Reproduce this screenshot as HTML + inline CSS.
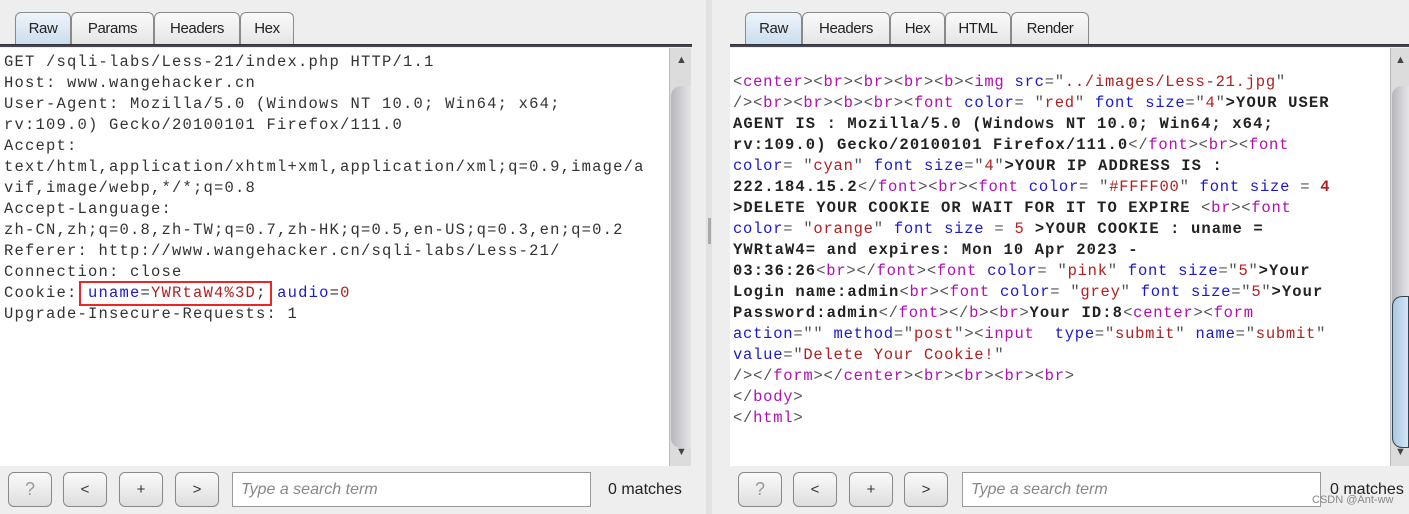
<!DOCTYPE html>
<html><head><meta charset="utf-8"><style>
*{margin:0;padding:0;box-sizing:border-box}
body{width:1409px;height:514px;background:#eeeeee;position:relative;overflow:hidden;font-family:"Liberation Sans",sans-serif}
.abs{position:absolute}
.tab{position:absolute;top:12px;height:34px;border:1px solid #8a8a8a;border-bottom:none;border-radius:6px 6px 0 0;background:linear-gradient(#fafafa,#e4e4e4);font-size:15px;color:#222;text-align:center;line-height:32px;letter-spacing:-0.4px}
.tab.on{background:linear-gradient(#eef4fa,#c9dcee)}
.bar{position:absolute;top:44px;height:3px;background:#445;border-top:1px solid #333}
.ed{position:absolute;background:#fff}
.ln{position:absolute;white-space:pre;font-family:"Liberation Mono",monospace;font-size:15.5px;line-height:21px;color:#333}
.L .ln{letter-spacing:1.2px;left:4px}
.R .ln{letter-spacing:1.1px;left:733px;font-weight:bold;color:#222}
.R .ln span{letter-spacing:0.75px}
.t{color:#b010b0;font-weight:normal}
.p{color:#555;font-weight:normal}
.a{color:#1a1acc;font-weight:normal}
.v{color:#b02020;font-weight:normal}
.sb{position:absolute;width:22px;background:#dcdcdc;border-left:1px solid #bbb}
.thumb{position:absolute;left:1px;right:0;border-radius:10px 0 0 10px;background:linear-gradient(90deg,#b5b5ba,#d4d4d8 60%,#e4e4e6)}
.btn{position:absolute;top:472px;width:44px;height:35px;border:1px solid #888;border-radius:6px;background:linear-gradient(#fafafa,#dedede);text-align:center;line-height:33px;font-size:15px;color:#333}
.inp{position:absolute;top:472px;height:35px;background:#fff;border:1px solid #999;font-style:italic;color:#888;font-size:16px;line-height:33px;padding-left:8px}
.m{position:absolute;top:481px;font-size:16px;color:#222}
</style></head><body>
<div class="tab on" style="left:15px;width:56px">Raw</div>
<div class="tab" style="left:71px;width:83px">Params</div>
<div class="tab" style="left:154px;width:86px">Headers</div>
<div class="tab" style="left:240px;width:54px">Hex</div>
<div class="bar" style="left:0;width:692px"></div>
<div class="ed" style="left:0;top:48px;width:669px;height:418px"></div>
<div class="sb" style="left:669px;top:48px;height:418px"><div class="abs" style="top:6px;left:6px;font-size:11px;color:#444">▲</div><div class="thumb" style="top:38px;height:362px"></div><div class="abs" style="top:398px;left:6px;font-size:11px;color:#444">▼</div></div>
<div class="L">
<div class="ln" style="top:52px">GET /sqli-labs/Less-21/index.php HTTP/1.1</div>
<div class="ln" style="top:73px">Host: www.wangehacker.cn</div>
<div class="ln" style="top:94px">User-Agent: Mozilla/5.0 (Windows NT 10.0; Win64; x64;</div>
<div class="ln" style="top:115px">rv:109.0) Gecko/20100101 Firefox/111.0</div>
<div class="ln" style="top:136px">Accept:</div>
<div class="ln" style="top:157px">text/html,application/xhtml+xml,application/xml;q=0.9,image/a</div>
<div class="ln" style="top:178px">vif,image/webp,*/*;q=0.8</div>
<div class="ln" style="top:199px">Accept-Language:</div>
<div class="ln" style="top:220px">zh-CN,zh;q=0.8,zh-TW;q=0.7,zh-HK;q=0.5,en-US;q=0.3,en;q=0.2</div>
<div class="ln" style="top:241px">Referer: http://www.wangehacker.cn/sqli-labs/Less-21/</div>
<div class="ln" style="top:262px">Connection: close</div>
<div class="ln" style="top:283px">Cookie: <span class="a">uname</span>=<span class="v">YWRtaW4%3D</span>; <span class="a">audio</span>=<span class="v">0</span></div>
<div class="ln" style="top:304px">Upgrade-Insecure-Requests: 1</div>
</div>
<div class="abs" style="left:79px;top:281px;width:193px;height:25px;border:2px solid #e8262b"></div>
<div class="abs" style="left:706px;top:0;width:6px;height:514px;background:#e2e2e2"></div>
<div class="abs" style="left:708px;top:218px;width:3px;height:26px;background:#aaa"></div>
<div class="tab on" style="left:745px;width:57px">Raw</div>
<div class="tab" style="left:802px;width:88px">Headers</div>
<div class="tab" style="left:890px;width:55px">Hex</div>
<div class="tab" style="left:945px;width:66px">HTML</div>
<div class="tab" style="left:1011px;width:78px">Render</div>
<div class="bar" style="left:730px;width:679px"></div>
<div class="ed" style="left:730px;top:48px;width:661px;height:418px"></div>
<div class="sb" style="left:1390px;top:48px;height:418px;width:19px"><div class="abs" style="top:6px;left:4px;font-size:11px;color:#444">▲</div><div class="thumb" style="top:38px;height:362px"></div><div class="thumb" style="top:248px;height:152px;background:linear-gradient(90deg,#a9c8e2,#d4e6f4);border:1px solid #345"></div><div class="abs" style="top:398px;left:4px;font-size:11px;color:#444">▼</div></div>
<div class="R">
<div class="ln" style="top:72px"><span class="p">&lt;</span><span class="t">center</span><span class="p">&gt;&lt;</span><span class="t">br</span><span class="p">&gt;&lt;</span><span class="t">br</span><span class="p">&gt;&lt;</span><span class="t">br</span><span class="p">&gt;&lt;</span><span class="t">b</span><span class="p">&gt;&lt;</span><span class="t">img</span><span class="p"> </span><span class="a">src</span><span class="p">="</span><span class="v">../images/Less-21.jpg</span><span class="p">"</span></div>
<div class="ln" style="top:93px"><span class="p">/&gt;&lt;</span><span class="t">br</span><span class="p">&gt;&lt;</span><span class="t">br</span><span class="p">&gt;&lt;</span><span class="t">b</span><span class="p">&gt;&lt;</span><span class="t">br</span><span class="p">&gt;&lt;</span><span class="t">font</span><span class="p"> </span><span class="a">color</span><span class="p">= "</span><span class="v">red</span><span class="p">" </span><span class="a">font size</span><span class="p">="</span><span class="v">4</span><span class="p">"</span>&gt;YOUR USER</div>
<div class="ln" style="top:114px">AGENT IS : Mozilla/5.0 (Windows NT 10.0; Win64; x64;</div>
<div class="ln" style="top:135px">rv:109.0) Gecko/20100101 Firefox/111.0<span class="p">&lt;/</span><span class="t">font</span><span class="p">&gt;&lt;</span><span class="t">br</span><span class="p">&gt;&lt;</span><span class="t">font</span></div>
<div class="ln" style="top:156px"><span class="a">color</span><span class="p">= "</span><span class="v">cyan</span><span class="p">" </span><span class="a">font size</span><span class="p">="</span><span class="v">4</span><span class="p">"</span>&gt;YOUR IP ADDRESS IS :</div>
<div class="ln" style="top:177px">222.184.15.2<span class="p">&lt;/</span><span class="t">font</span><span class="p">&gt;&lt;</span><span class="t">br</span><span class="p">&gt;&lt;</span><span class="t">font</span><span class="p"> </span><span class="a">color</span><span class="p">= "</span><span class="v">#FFFF00</span><span class="p">" </span><span class="a">font size</span><span class="p"> = </span><span class="v" style="font-weight:bold">4</span></div>
<div class="ln" style="top:198px">&gt;DELETE YOUR COOKIE OR WAIT FOR IT TO EXPIRE <span class="p">&lt;</span><span class="t">br</span><span class="p">&gt;&lt;</span><span class="t">font</span></div>
<div class="ln" style="top:219px"><span class="a">color</span><span class="p">= "</span><span class="v">orange</span><span class="p">" </span><span class="a">font size</span><span class="p"> = </span><span class="v">5</span> &gt;YOUR COOKIE : uname =</div>
<div class="ln" style="top:240px">YWRtaW4= and expires: Mon 10 Apr 2023 -</div>
<div class="ln" style="top:261px">03:36:26<span class="p">&lt;</span><span class="t">br</span><span class="p">&gt;&lt;/</span><span class="t">font</span><span class="p">&gt;&lt;</span><span class="t">font</span><span class="p"> </span><span class="a">color</span><span class="p">= "</span><span class="v">pink</span><span class="p">" </span><span class="a">font size</span><span class="p">="</span><span class="v">5</span><span class="p">"</span>&gt;Your</div>
<div class="ln" style="top:282px">Login name:admin<span class="p">&lt;</span><span class="t">br</span><span class="p">&gt;&lt;</span><span class="t">font</span><span class="p"> </span><span class="a">color</span><span class="p">= "</span><span class="v">grey</span><span class="p">" </span><span class="a">font size</span><span class="p">="</span><span class="v">5</span><span class="p">"</span>&gt;Your</div>
<div class="ln" style="top:303px">Password:admin<span class="p">&lt;/</span><span class="t">font</span><span class="p">&gt;&lt;/</span><span class="t">b</span><span class="p">&gt;&lt;</span><span class="t">br</span><span class="p">&gt;</span>Your ID:8<span class="p">&lt;</span><span class="t">center</span><span class="p">&gt;&lt;</span><span class="t">form</span></div>
<div class="ln" style="top:324px"><span class="a">action</span><span class="p">="" </span><span class="a">method</span><span class="p">="</span><span class="v">post</span><span class="p">"&gt;&lt;</span><span class="t">input</span><span class="p">  </span><span class="a">type</span><span class="p">="</span><span class="v">submit</span><span class="p">" </span><span class="a">name</span><span class="p">="</span><span class="v">submit</span><span class="p">"</span></div>
<div class="ln" style="top:345px"><span class="a">value</span><span class="p">="</span><span class="v">Delete Your Cookie!</span><span class="p">"</span></div>
<div class="ln" style="top:366px"><span class="p">/&gt;&lt;/</span><span class="t">form</span><span class="p">&gt;&lt;/</span><span class="t">center</span><span class="p">&gt;&lt;</span><span class="t">br</span><span class="p">&gt;&lt;</span><span class="t">br</span><span class="p">&gt;&lt;</span><span class="t">br</span><span class="p">&gt;&lt;</span><span class="t">br</span><span class="p">&gt;</span></div>
<div class="ln" style="top:387px"><span class="p">&lt;/</span><span class="t">body</span><span class="p">&gt;</span></div>
<div class="ln" style="top:408px"><span class="p">&lt;/</span><span class="t">html</span><span class="p">&gt;</span></div>
</div>
<div class="btn" style="left:8px;color:#999;font-size:18px">?</div>
<div class="btn" style="left:63px">&lt;</div>
<div class="btn" style="left:119px">+</div>
<div class="btn" style="left:175px">&gt;</div>
<div class="inp" style="left:232px;width:359px">Type a search term</div>
<div class="m" style="left:608px">0 matches</div>
<div class="btn" style="left:738px;color:#999;font-size:18px">?</div>
<div class="btn" style="left:793px">&lt;</div>
<div class="btn" style="left:849px">+</div>
<div class="btn" style="left:904px">&gt;</div>
<div class="inp" style="left:962px;width:359px">Type a search term</div>
<div class="m" style="left:1330px">0 matches</div>
<div class="abs" style="left:1312px;top:494px;font-size:11px;color:#888">CSDN @Ant-ww</div>
</body></html>
